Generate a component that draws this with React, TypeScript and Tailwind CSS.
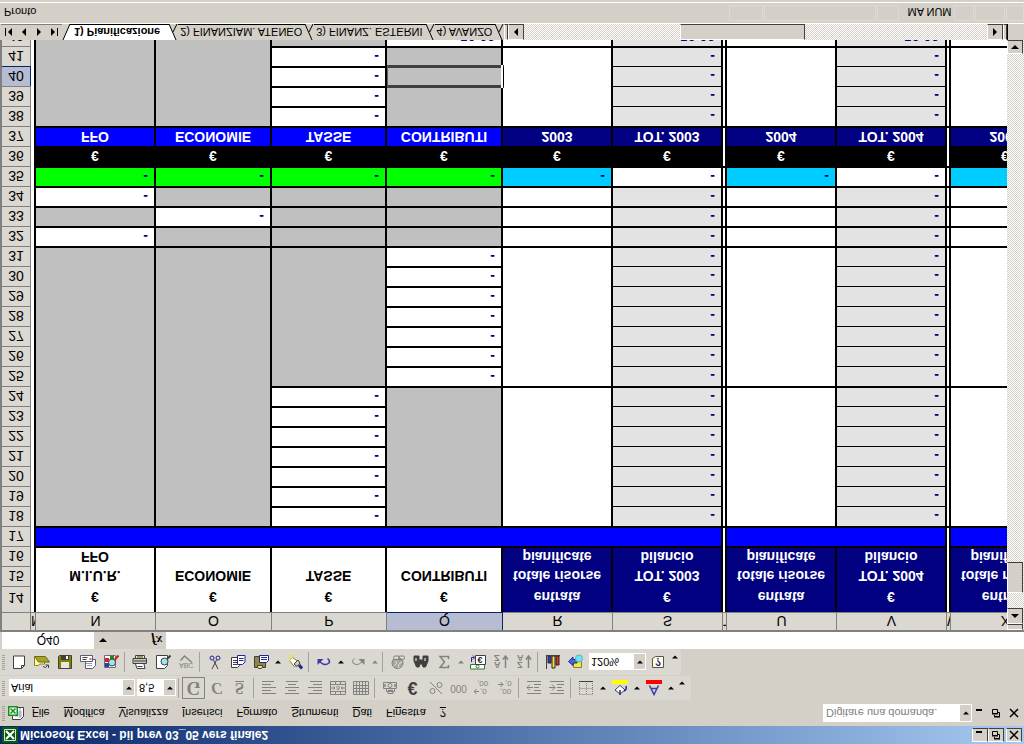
import React from 'react';
import clsx from 'clsx';

type Fill = 'white' | 'gray' | 'light' | 'green' | 'cyan' | 'blue' | 'navy' | 'black';

interface Cell {
  fill: Fill;
  text?: string;
  line?: 0 | 1 | 2;
  open?: boolean;
}

interface Row {
  n: number;
  cells: Cell[];
}

const fills: Record<Fill, string> = {
  white: 'bg-white text-[#000080]',
  gray: 'bg-[#c0c0c0] text-[#000080]',
  light: 'bg-[#e3e3e3] text-[#000080]',
  green: 'bg-[#00ff00] text-[#000080]',
  cyan: 'bg-[#00ccff] text-[#000080]',
  blue: 'bg-[#0000ff] text-white',
  navy: 'bg-[#000080] text-white',
  black: 'bg-black text-white',
};

const columns = [
  { name: 'M', width: 'w-[5px]' },
  { name: 'N', width: 'w-[120px]' },
  { name: 'O', width: 'w-[116px]' },
  { name: 'P', width: 'w-[115px]' },
  { name: 'Q', width: 'w-[116px]' },
  { name: 'R', width: 'w-[110px]' },
  { name: 'S', width: 'w-[110px]' },
  { name: 'T', width: 'w-[4px]' },
  { name: 'U', width: 'w-[110px]' },
  { name: 'V', width: 'w-[110px]' },
  { name: 'W', width: 'w-[4px]' },
  { name: 'X', width: 'w-[110px]' },
];

const cell = (fill: Fill, text = '', line: 0 | 1 | 2 = 0, open = false): Cell => ({ fill, text, line, open });

// N..Q come from the caller, the yearly blocks R..X repeat
const makeRow = (n: number, first: Cell[], total: Cell, sum: Cell, gap: 0 | 2): Row => {
  const spacer = cell('white', '', gap);
  return { n, cells: [cell('white'), ...first, total, sum, spacer, total, sum, spacer, total] };
};

const headingRow = (n: number, names: string[], total: string, years: string[], line: 0 | 2): Row => ({
  n,
  cells: [
    cell('white'),
    ...names.map((name) => cell('white', name, line)),
    cell('navy', total, line),
    cell('navy', years[0], line),
    cell('white'),
    cell('navy', total, line),
    cell('navy', years[1], line),
    cell('white'),
    cell('navy', total, line),
  ],
});

const gray = cell('gray');
const grayLine = cell('gray', '', 2);
const dash = cell('white', '-', 2);
const green = cell('green', '-', 2);

const rows: Row[] = [
  headingRow(14, ['€', '€', '€', '€'], 'entrata', ['€', '€'], 0),
  headingRow(15, ['M.I.U.R.', 'ECONOMIE', 'TASSE', 'CONTRIBUTI'], 'totale risorse', ['TOT. 2003', 'TOT. 2004'], 0),
  headingRow(16, ['FFO', '', '', ''], 'pianificate', ['bilancio', 'bilancio'], 2),
  makeRow(
    17,
    [1, 2, 3, 4].map(() => cell('blue', '', 2, true)),
    cell('blue', '', 2, true),
    cell('blue', '', 2),
    2,
  ),
];

for (let n = 18; n <= 24; n++) {
  const last = n === 24;
  rows.push(
    makeRow(
      n,
      [gray, gray, dash, last ? grayLine : gray],
      cell('white', '', last ? 2 : 0),
      cell('light', '-', last ? 2 : 1),
      last ? 2 : 0,
    ),
  );
}

for (let n = 25; n <= 31; n++) {
  const last = n === 31;
  const block = last ? grayLine : gray;
  rows.push(
    makeRow(
      n,
      [block, block, block, dash],
      cell('white', '', last ? 2 : 0),
      cell('light', '-', last ? 2 : 1),
      last ? 2 : 0,
    ),
  );
}

rows.push(
  makeRow(32, [dash, grayLine, grayLine, grayLine], cell('white', '', 2), cell('light', '-', 2), 2),
  makeRow(33, [grayLine, dash, grayLine, grayLine], cell('white', '', 2), cell('light', '-', 2), 2),
  makeRow(34, [dash, grayLine, grayLine, grayLine], cell('white', '', 2), cell('light', '-', 2), 2),
  makeRow(35, [green, green, green, green], cell('cyan', '-', 2), cell('white', '-', 2), 2),
  makeRow(
    36,
    [1, 2, 3, 4].map(() => cell('black', '€')),
    cell('black', '€'),
    cell('black', '€'),
    0,
  ),
  {
    n: 37,
    cells: [
      cell('white'),
      cell('blue', 'FFO', 2),
      cell('blue', 'ECONOMIE', 2),
      cell('blue', 'TASSE', 2),
      cell('blue', 'CONTRIBUTI', 2),
      cell('navy', '2003', 2),
      cell('navy', 'TOT. 2003', 2),
      cell('white', '', 2),
      cell('navy', '2004', 2),
      cell('navy', 'TOT. 2004', 2),
      cell('white', '', 2),
      cell('navy', '2005', 2),
    ],
  },
);

for (let n = 38; n <= 41; n++) {
  const last = n === 41;
  rows.push(
    makeRow(
      n,
      [gray, gray, dash, last ? grayLine : gray],
      cell('white', '', last ? 2 : 0),
      cell('light', '-', last ? 2 : 1),
      last ? 2 : 0,
    ),
  );
}

rows.push(makeRow(42, [gray, gray, gray, cell('white', '50,00')], cell('white'), cell('light', '50,00'), 0));

const raised = 'border border-white border-r-[#404040] border-b-[#404040] bg-[#d4d0c8]';
const dither = 'bg-[repeating-conic-gradient(#ffffff_0_25%,#d4d0c8_0_50%)] bg-[length:2px_2px]';

const Triangle = ({ dir, small }: { dir: 'up' | 'down' | 'left' | 'right'; small?: boolean }) => {
  const shapes = { up: 'M0 6h8L4 2z', down: 'M0 2h8L4 6z', left: 'M6 0v8L2 4z', right: 'M2 0v8l4-4z' };
  return (
    <svg viewBox="0 0 8 8" className={small ? 'h-[6px] w-[6px]' : 'h-2 w-2'} aria-hidden="true">
      <path d={shapes[dir]} fill="currentColor" />
    </svg>
  );
};

const Icon = ({ children }: { children: React.ReactNode }) => (
  <svg viewBox="0 0 16 16" className="h-4 w-4" fill="none" stroke="#404040" aria-hidden="true">
    {children}
  </svg>
);

const G = '#848280';

const icons = {
  fresh: (
    <Icon>
      <path d="M2.500 1.500h8l3 3v9.500h-11z" fill="#fff" />
      <path d="M10.500 1.500v3h3" />
    </Icon>
  ),
  open: (
    <Icon>
      <path d="M.5 13V4.500h4l1 1.500h5v2" fill="#ffff9a" stroke="#84823a" />
      <path d="M.5 13.500L4.500 8h11l-4 5.500z" fill="#a5a22e" stroke="#6b6810" />
      <path d="M9 3.500q3-2.500 4.500.8M14.500 2v3h-3" />
    </Icon>
  ),
  save: (
    <Icon>
      <path d="M1.500 1.500h13v13h-12l-1-1z" fill="#848200" />
      <path d="M4 2h8v6H4z" fill="#e8e6e0" stroke="none" />
      <path d="M4 10h8v4H4z" fill="#404040" stroke="none" />
      <path d="M9 11h2v3H9z" fill="#fff" stroke="none" />
    </Icon>
  ),
  mail: (
    <Icon>
      <path d="M5.500 1.500h7l3 3v6h-10z" fill="#fff" stroke="#5a5a7b" />
      <path d="M.5 8.500h12v6H.5z" fill="#fff" stroke="#5a5a7b" />
      <path d="M2.500 10.500h4M2.500 12.500h5" stroke="#404040" />
      <path d="M9.500 10h2v2h-2z" fill="#d66" stroke="none" />
      <path d="M6 6.500h6M7 4.500h5" stroke="#9a9ac0" />
    </Icon>
  ),
  research: (
    <Icon>
      <path d="M1.500 2.500h11v12h-11z" fill="#fff" stroke="#6b6b84" />
      <path d="M2 3h4v4H2z" fill="#24a" stroke="none" />
      <path d="M2 8h4v4H2z" fill="#d22" stroke="none" />
      <path d="M7 11h4v3H7z" fill="#282" stroke="none" />
      <circle cx="9" cy="7.500" r="3.500" fill="#9de6ee" />
      <path d="M11.500 10l4 4.500" stroke="#c22" strokeWidth="2" />
    </Icon>
  ),
  print: (
    <Icon>
      <path d="M3.500 6l1.500-4.500h8L12 6" fill="#fff" />
      <path d="M1 6.500h13.500v5H1z" fill="#c9c6be" />
      <path d="M3.500 11.500h9v3h-9z" fill="#f4f4a0" />
      <path d="M5.500 3.500h5M2 9h12M5 13h6" />
    </Icon>
  ),
  preview: (
    <Icon>
      <path d="M1.500 1.500h8l3 3v10h-11z" fill="#fff" />
      <circle cx="9.500" cy="8.500" r="3.500" fill="#9de6ee" />
      <path d="M12 11l3.500 3.500" strokeWidth="2" />
    </Icon>
  ),
  spell: (
    <Icon>
      <text x="1" y="7" fontSize="7" fill={G} stroke="none" className="font-['Liberation_Sans']">ABC</text>
      <path d="M2.500 9.500l4 4.500L14 7.500" stroke={G} strokeWidth="1.500" />
    </Icon>
  ),
  cut: (
    <Icon>
      <path d="M5 1l4.500 9M11 1L6.500 10" />
      <circle cx="5" cy="12" r="2" stroke="#24249a" />
      <circle cx="11" cy="12" r="2" stroke="#24249a" />
    </Icon>
  ),
  copy: (
    <Icon>
      <path d="M1.500 2.500h6l2 2v8h-8z" fill="#fff" />
      <path d="M3 5.500h4M3 7.500h4M3 9.500h4" />
      <path d="M7.500 5.500h5l2.500 2.500v6.500H7.500z" fill="#fff" stroke="#24249a" />
      <path d="M9 9.500h4.500M9 11.500h4.500" stroke="#24249a" />
    </Icon>
  ),
  paste: (
    <Icon>
      <path d="M1.500 2.500h11v11h-11z" fill="#8c8a3c" />
      <path d="M4.500 4.500V2.500L6 1.500h2l1.500 1v2z" fill="#f1ee74" />
      <path d="M6.500 7.500h7l2 2v5h-9z" fill="#fff" stroke="#24249a" />
      <path d="M8 10.500h6M8 12.500h6" stroke="#24249a" />
    </Icon>
  ),
  brush: (
    <Icon>
      <path d="M2.500 9.500l5-6.500 4.500 5-6.500 4.500z" fill="#fff" stroke="#84823a" />
      <path d="M1 12l3 2.500h4M1.500 9l5 5" stroke="#e8e23a" />
      <path d="M7 6l4 4 2-3-3-3.500z" fill="#d4d0a0" />
      <path d="M12 5l3-3.500" stroke="#24249a" strokeWidth="3" />
    </Icon>
  ),
  undo: (
    <Icon>
      <path d="M4 8Q9 3.500 13 7q1.500 2.500-1.500 4.500" stroke="#3a3aa8" strokeWidth="1.500" />
      <path d="M1.500 5v6h6z" fill="#3a3aa8" stroke="none" />
    </Icon>
  ),
  redo: (
    <Icon>
      <path d="M12 8Q7 3.500 3 7q-1.500 2.500 1.500 4.500" stroke={G} />
      <path d="M14.500 5v6h-6z" fill={G} stroke="none" />
    </Icon>
  ),
  link: (
    <Icon>
      <circle cx="7.500" cy="7" r="5.500" fill="#a8a5a0" stroke={G} />
      <path d="M4 4q4 2 2 5M9 2q-2 4 3 6" stroke="#e4e2dc" />
      <rect x="3.500" y="10.500" width="6" height="3.500" rx="1.500" fill="#dbd8d1" stroke={G} />
      <rect x="8.500" y="10.500" width="6" height="3.500" rx="1.500" stroke={G} />
    </Icon>
  ),
  find: (
    <Icon>
      <path d="M1 14V9l2.500-6H6l1 3h2l1-3h2.500L15 9v5h-5v-4H6v4z" fill="#404040" />
      <path d="M3 12V9M12 12V9" stroke="#fff" />
    </Icon>
  ),
  sum: (
    <Icon>
      <path d="M12.500 5V2.500H4L8.500 8 4 13.500h8.500V11" stroke={G} strokeWidth="1.500" />
    </Icon>
  ),
  euroBox: (
    <Icon>
      <path d="M.5 1h14v4.500H.5z" fill="#fff" stroke="#2a7a3a" />
      <circle cx="7.500" cy="3.500" r="1.500" stroke="#2a7a3a" />
      <path d="M5.500 5.500h10v9h-10z" fill="#fff" />
      <text x="7.500" y="13" fontSize="9" fontWeight="700" fill="#222" stroke="none" className="font-['Liberation_Sans']">€</text>
      <path d="M1.500 8v4.500H4M3 10.500l2 2-2 2" stroke="#24249a" />
    </Icon>
  ),
  sortUp: (
    <Icon>
      <text x="1" y="8" fontSize="9" fontWeight="700" fill={G} stroke="none" className="font-['Liberation_Sans']">A</text>
      <text x="1" y="15" fontSize="9" fontWeight="700" fill={G} stroke="none" className="font-['Liberation_Sans']">Z</text>
      <path d="M12.500 2v12M10 10.500l2.500 3.500 2.500-3.500" stroke={G} strokeWidth="1.500" />
    </Icon>
  ),
  sortDown: (
    <Icon>
      <text x="1" y="8" fontSize="9" fontWeight="700" fill={G} stroke="none" className="font-['Liberation_Sans']">Z</text>
      <text x="1" y="15" fontSize="9" fontWeight="700" fill={G} stroke="none" className="font-['Liberation_Sans']">A</text>
      <path d="M12.500 2v12M10 10.500l2.500 3.500 2.500-3.500" stroke={G} strokeWidth="1.500" />
    </Icon>
  ),
  chart: (
    <Icon>
      <path d="M1.500 1v13.500H14" />
      <path d="M3 7h3v7H3z" fill="#3a3ad0" stroke="#222" />
      <path d="M7 2h3v12H7z" fill="#f4e83a" stroke="#222" />
      <path d="M11 5h3v9h-3z" fill="#e03030" stroke="#222" />
      <path d="M1 14.500h14" />
    </Icon>
  ),
  draw: (
    <Icon>
      <path d="M5.500 2.500h8v6h-8z" fill="#f4e83a" stroke="#84823a" />
      <path d="M.5 8.500l4.500-4V7h4v3.500H5V13z" fill="#4a6ad0" stroke="#24249a" />
      <circle cx="11" cy="11.500" r="3.500" fill="#6fe3ee" stroke="#5ab0c0" />
    </Icon>
  ),
  help: (
    <Icon>
      <path d="M2.500 2.500h11v11h-8l-3-2z" fill="#ffffd8" stroke="#555" />
      <text x="5" y="12" fontSize="10" fontWeight="700" fill="#24249a" stroke="none" className="font-['Liberation_Sans']">?</text>
    </Icon>
  ),
  left: (
    <Icon>
      <path d="M1 2.500h14M1 5.500h9M1 8.500h14M1 11.500h9M1 14.500h12" stroke={G} />
    </Icon>
  ),
  center: (
    <Icon>
      <path d="M1 2.500h14M4 5.500h8M1 8.500h14M4 11.500h8M2 14.500h12" stroke={G} />
    </Icon>
  ),
  right: (
    <Icon>
      <path d="M1 2.500h14M6 5.500h9M1 8.500h14M6 11.500h9M3 14.500h12" stroke={G} />
    </Icon>
  ),
  merge: (
    <Icon>
      <path d="M.5 1.500h15v13H.5zM.5 4.500h15M.5 11.500h15M5.500 1.500v3M10.500 1.500v3M5.500 11.500v3M10.500 11.500v3" stroke={G} />
      <path d="M1 8h4M11 8h4M3.500 6.500L5 8 3.500 9.500M12.500 6.500L11 8l1.500 1.500" stroke={G} />
      <text x="6" y="10" fontSize="7" fill={G} stroke="none" className="font-['Liberation_Sans']">a</text>
    </Icon>
  ),
  grid: (
    <Icon>
      <path d="M.5 1.500h15v13H.5zM.5 4.500h15M.5 7.500h15M.5 10.500h15M3.500 2v12M6.500 2v12M9.500 2v12M12.500 2v12" stroke={G} />
    </Icon>
  ),
  money: (
    <Icon>
      <path d="M1.500 7.500h13v6h-13zM4.500 7V4.500h8V7M6 4V2.500h5V4" stroke={G} />
      <circle cx="8" cy="10.500" r="2" stroke={G} />
      <path d="M3 9v3M13 9v3M6 5.500h5" stroke={G} strokeWidth="1.500" />
    </Icon>
  ),
  percent: (
    <Icon>
      <circle cx="4.500" cy="5" r="2.500" stroke={G} />
      <circle cx="11.500" cy="11" r="2.500" stroke={G} />
      <path d="M14 2L2 14" stroke={G} />
    </Icon>
  ),
  moreDec: (
    <Icon>
      <text x="6" y="7" fontSize="8" fill={G} stroke="none" className="font-['Liberation_Sans']">,0</text>
      <text x="3" y="15" fontSize="8" fill={G} stroke="none" className="font-['Liberation_Sans']">,00</text>
      <path d="M0 4.500h5M2.500 2L0 4.500 2.500 7" stroke={G} />
    </Icon>
  ),
  lessDec: (
    <Icon>
      <text x="3" y="7" fontSize="8" fill={G} stroke="none" className="font-['Liberation_Sans']">,00</text>
      <text x="8" y="15" fontSize="8" fill={G} stroke="none" className="font-['Liberation_Sans']">,0</text>
      <path d="M1 11.500h5M3.500 9L6 11.500 3.500 14" stroke={G} />
    </Icon>
  ),
  outdent: (
    <Icon>
      <path d="M1 2.500h14M8 5.500h7M8 8.500h5M8 11.500h7M1 14.500h14M1 8.500h6M4 5.500l-3 3 3 3" stroke={G} />
    </Icon>
  ),
  indent: (
    <Icon>
      <path d="M1 2.500h14M8 5.500h7M8 8.500h5M8 11.500h7M1 14.500h14M0 8.500h6M3 5.500l3 3-3 3" stroke={G} />
    </Icon>
  ),
  borders: (
    <Icon>
      <path d="M1.500 1.500h13M1.500 7.500h13M1.500 2v12M8.500 2v12M14.500 2v12" stroke={G} strokeDasharray="1 1" />
      <path d="M1 14.500h14" stroke="#404040" />
    </Icon>
  ),
  bucket: (
    <Icon>
      <path d="M3 6l5-4 5 4-5 4.500z" fill="#fff" />
      <path d="M8 6V1M12 5q3 1 2 5" stroke="#24249a" strokeWidth="1.500" />
      <path d="M0 12h16v4H0z" fill="#ffff00" stroke="none" />
    </Icon>
  ),
  fontColor: (
    <Icon>
      <path d="M3.500 10.500L8 1.500l4.500 9M5 7.500h6" stroke="#3a3aa8" strokeWidth="1.500" />
      <path d="M0 12h16v4H0z" fill="#ff0000" stroke="none" />
    </Icon>
  ),
};

const Tool = ({ label, children }: { label: string; children: React.ReactNode }) => (
  <button aria-label={label} className="flex h-[22px] w-[23px] shrink-0 items-center justify-center">
    {children}
  </button>
);

const Arrow = ({ label, off }: { label: string; off?: boolean }) => (
  <button aria-label={label} className={clsx('flex h-[22px] w-[11px] shrink-0 items-center justify-center', off && 'text-[#848280]')}>
    <Triangle dir="down" small />
  </button>
);

const Sep = () => <div className="mx-[2px] h-5 w-[2px] shrink-0 border-l border-[#a5a29c]" />;

const Grip = () => (
  <div className="mx-[2px] h-4 w-[3px] shrink-0 bg-[repeating-linear-gradient(#a5a29c_0_1px,transparent_1px_2px)]" />
);

interface ComboProps {
  label: string;
  value: string;
  className: string;
}

const Combo = ({ label, value, className }: ComboProps) => (
  <div className={clsx('relative flex h-[17px] shrink-0 bg-white', className)}>
    <select aria-label={label} className="h-full w-full appearance-none bg-transparent pl-[2px] pr-3 text-[11px] leading-4 outline-none">
      <option>{value}</option>
    </select>
    <span className="pointer-events-none absolute inset-y-px right-px flex w-[11px] items-center justify-center bg-[#d4d0c8]">
      <Triangle dir="down" small />
    </span>
  </div>
);

const MinGlyph = () => (
  <svg viewBox="0 0 10 10" className="h-[10px] w-[10px]" aria-hidden="true">
    <path d="M1 7h6v2H1z" fill="#000" />
  </svg>
);

const RestoreGlyph = () => (
  <svg viewBox="0 0 10 10" className="h-[10px] w-[10px]" fill="none" stroke="#000" aria-hidden="true">
    <path d="M3.500 3V1.500h5v4H7M3 1h6M1.500 4.500h5v4h-5zM1 4h6" />
  </svg>
);

const CloseGlyph = () => (
  <svg viewBox="0 0 10 10" className="h-[10px] w-[10px]" fill="none" stroke="#000" strokeWidth="1.500" aria-hidden="true">
    <path d="M1 1l8 8M9 1L1 9" />
  </svg>
);

const ExcelMark = () => (
  <svg viewBox="0 0 16 16" className="h-4 w-4" aria-hidden="true">
    <path d="M0 0h16v16H0z" fill="#0a5a14" />
    <path d="M2.500 2.500h11v11h-11z" fill="none" stroke="#cfe8cf" />
    <path d="M4 4l8 8M12 4l-8 8" stroke="#fff" strokeWidth="2" />
  </svg>
);

const BookMark = () => (
  <svg viewBox="0 0 16 16" className="h-4 w-4" aria-hidden="true">
    <path d="M4.500 1.500h8l3 3v9h-11z" fill="#fff" stroke="#404040" />
    <path d="M7 5h7M7 7h7M7 9h7M12 3v10" stroke="#9aa0c0" />
    <path d="M0 5h10v10H0z" fill="#109018" />
    <path d="M1.500 6.500h7v7h-7z" fill="#fff" />
    <path d="M2.500 7.500l5 5M7.500 7.500l-5 5" stroke="#109018" strokeWidth="1.500" />
  </svg>
);

const menus = [
  ['', 'F', 'ile'],
  ['', 'M', 'odifica'],
  ['', 'V', 'isualizza'],
  ['', 'I', 'nserisci'],
  ['F', 'o', 'rmato'],
  ['', 'S', 'trumenti'],
  ['', 'D', 'ati'],
  ['Fi', 'n', 'estra'],
  ['', '?', ''],
];

const TitleBar = () => (
  <header className="flex h-[18px] shrink-0 items-center bg-linear-to-r from-[#0a246a] to-[#a6caf0] px-[2px]">
    <ExcelMark />
    <h1 className="ml-[2px] flex-1 text-[12px] leading-4 font-bold text-white">Microsoft Excel - bil prev 03_05 vers finale2</h1>
    <button aria-label="Riduci a icona" className={clsx('flex h-[14px] w-4 items-center justify-center', raised)}>
      <MinGlyph />
    </button>
    <button aria-label="Ripristina" className={clsx('flex h-[14px] w-4 items-center justify-center', raised)}>
      <RestoreGlyph />
    </button>
    <button aria-label="Chiudi" className={clsx('ml-[2px] flex h-[14px] w-4 items-center justify-center', raised)}>
      <CloseGlyph />
    </button>
  </header>
);

const MenuBar = () => (
  <nav className="flex h-[26px] shrink-0 items-center pr-[2px]">
    <Grip />
    <span className="mr-2 ml-px">
      <BookMark />
    </span>
    <div className="flex flex-1 gap-[14px]">
      {menus.map(([before, key, after]) => (
        <button key={key + after} className="text-[11px] leading-4">
          {before}
          <span className="underline">{key}</span>
          {after}
        </button>
      ))}
    </div>
    <div className="flex h-[18px] w-[149px] bg-white">
      <input
        aria-label="Domanda"
        defaultValue="Digitare una domanda."
        className="min-w-0 flex-1 pl-[3px] text-[11px] text-[#808080] outline-none"
      />
      <button aria-label="Domande recenti" className="m-px flex w-[11px] items-center justify-center bg-[#d4d0c8]">
        <Triangle dir="down" small />
      </button>
    </div>
    <button aria-label="Riduci finestra" className="flex w-4 justify-center">
      <MinGlyph />
    </button>
    <button aria-label="Ripristina finestra" className="flex w-4 justify-center">
      <RestoreGlyph />
    </button>
    <button aria-label="Chiudi finestra" className="ml-[2px] flex w-4 justify-center">
      <CloseGlyph />
    </button>
  </nav>
);

const FormatBar = () => (
  <div className="mb-px flex h-6 w-max items-center rounded-r bg-[#dbd8d1] pr-1">
    <Grip />
    <Combo label="Tipo di carattere" value="Arial" className="ml-[2px] w-[126px]" />
    <Combo label="Dimensione carattere" value="8,5" className="ml-[2px] w-[39px]" />
    <Sep />
    <button
      aria-label="Grassetto"
      className="flex h-[22px] w-[23px] items-center justify-center border border-[#848280] font-['Liberation_Serif'] text-[18px] leading-5 font-bold text-[#848280]"
    >
      G
    </button>
    <button aria-label="Corsivo" className="w-[23px] font-['Liberation_Serif'] text-[16px] leading-5 font-bold text-[#848280] italic">
      C
    </button>
    <button aria-label="Sottolineato" className="w-[23px] font-['Liberation_Serif'] text-[16px] leading-5 font-bold text-[#848280] underline">
      S
    </button>
    <Sep />
    <Tool label="Allinea a sinistra">{icons.left}</Tool>
    <Tool label="Allinea al centro">{icons.center}</Tool>
    <Tool label="Allinea a destra">{icons.right}</Tool>
    <Tool label="Unisci e centra">{icons.merge}</Tool>
    <Tool label="Formato celle">{icons.grid}</Tool>
    <Sep />
    <Tool label="Valuta">{icons.money}</Tool>
    <button aria-label="Euro" className="w-[23px] text-[18px] leading-5 font-bold text-[#404040]">€</button>
    <Tool label="Stile percentuale">{icons.percent}</Tool>
    <button aria-label="Stile separatore" className="w-[23px] text-[10px] leading-5 text-[#848280]">000</button>
    <Tool label="Aumenta decimali">{icons.moreDec}</Tool>
    <Tool label="Diminuisci decimali">{icons.lessDec}</Tool>
    <Sep />
    <Tool label="Riduci rientro">{icons.outdent}</Tool>
    <Tool label="Aumenta rientro">{icons.indent}</Tool>
    <Sep />
    <Tool label="Bordi">{icons.borders}</Tool>
    <Arrow label="Altri bordi" />
    <Tool label="Colore riempimento">{icons.bucket}</Tool>
    <Arrow label="Altri riempimenti" />
    <Tool label="Colore carattere">{icons.fontColor}</Tool>
    <Arrow label="Altri colori" />
    <button aria-label="Opzioni formattazione" className="flex h-4 w-[11px] items-end justify-center">
      <Triangle dir="down" small />
    </button>
  </div>
);

const StandardBar = () => (
  <div className="flex h-[26px] w-max items-center rounded-r bg-[#dbd8d1] pr-px">
    <Grip />
    <Tool label="Nuovo">{icons.fresh}</Tool>
    <Tool label="Apri">{icons.open}</Tool>
    <Tool label="Salva">{icons.save}</Tool>
    <Tool label="Posta elettronica">{icons.mail}</Tool>
    <Tool label="Cerca">{icons.research}</Tool>
    <Sep />
    <Tool label="Stampa">{icons.print}</Tool>
    <Tool label="Anteprima">{icons.preview}</Tool>
    <Tool label="Controllo ortografia">{icons.spell}</Tool>
    <Sep />
    <Tool label="Taglia">{icons.cut}</Tool>
    <Tool label="Copia">{icons.copy}</Tool>
    <Tool label="Incolla">{icons.paste}</Tool>
    <Arrow label="Opzioni incolla" />
    <Tool label="Copia formato">{icons.brush}</Tool>
    <Sep />
    <Tool label="Annulla">{icons.undo}</Tool>
    <Arrow label="Elenco annulla" />
    <Tool label="Ripeti">{icons.redo}</Tool>
    <Arrow label="Elenco ripeti" off />
    <Sep />
    <Tool label="Collegamento">{icons.link}</Tool>
    <Tool label="Trova">{icons.find}</Tool>
    <Tool label="Somma automatica">{icons.sum}</Tool>
    <Arrow label="Altre funzioni" off />
    <Tool label="Conversione euro">{icons.euroBox}</Tool>
    <Tool label="Ordinamento crescente">{icons.sortUp}</Tool>
    <Tool label="Ordinamento decrescente">{icons.sortDown}</Tool>
    <Sep />
    <Tool label="Creazione grafico">{icons.chart}</Tool>
    <Tool label="Disegno">{icons.draw}</Tool>
    <Combo label="Zoom" value="120%" className="ml-[2px] w-[57px]" />
    <Tool label="Guida">{icons.help}</Tool>
    <button aria-label="Opzioni standard" className="flex h-4 w-[11px] items-end justify-center">
      <Triangle dir="down" small />
    </button>
  </div>
);

const FormulaBar = () => (
  <div className="flex h-[17px] shrink-0 pl-[2px]">
    <input aria-label="Casella nome" defaultValue="Q40" className="w-[92px] bg-white text-center text-[12px] outline-none" />
    <button aria-label="Elenco nomi" className="flex w-[18px] items-center justify-center">
      <Triangle dir="down" />
    </button>
    <button
      aria-label="Inserisci funzione"
      className="ml-9 w-[18px] shrink-0 font-['Liberation_Serif'] text-[13px] leading-4 font-bold italic"
    >
      fx
    </button>
    <input aria-label="Barra della formula" className="min-w-0 flex-1 bg-white px-1 text-[11px] outline-none" />
  </div>
);

const Sheet = () => (
  <div className="min-w-0 flex-1 overflow-hidden border-t-2 border-l-2 border-[#808080] bg-white">
    <table className="w-[1059px] table-fixed border-separate border-spacing-0 text-[14px] leading-[18px]">
      <thead>
        <tr className="h-[18px]">
          <th className="w-[29px] border-r border-b border-[#808080] bg-[#dbd8d1] p-0" aria-label="Seleziona tutto" />
          {columns.map(({ name, width }) => (
            <th
              key={name}
              scope="col"
              className={clsx(
                'h-[18px] overflow-hidden border-r border-b p-0 leading-4 font-normal',
                width,
                name === 'Q' ? 'border-[#0a246a] bg-[#b6bdd2]' : 'border-[#808080] bg-[#dbd8d1]',
              )}
            >
              {name}
            </th>
          ))}
        </tr>
      </thead>
      <tbody>
        {rows.map(({ n, cells }) => (
          <tr key={n} className={n === 14 ? 'h-[26px]' : 'h-5'}>
            <th
              scope="row"
              className={clsx(
                'border-r border-b px-0 pt-0 text-center font-normal',
                n === 14 ? 'pb-[2px] align-bottom' : 'pb-0',
                n === 40 ? 'border-[#0a246a] bg-[#b6bdd2]' : 'border-[#808080] bg-[#dbd8d1]',
              )}
            >
              {n}
            </th>
            {cells.map((c, i) => (
              <td
                key={columns[i].name}
                className={clsx(
                  'relative border-black pt-0 pl-0 font-bold whitespace-nowrap',
                  fills[c.fill],
                  n < 17 && c.fill === 'white' && 'text-black',
                  n === 14 ? 'pb-[2px] align-bottom' : 'pb-0',
                  c.open ? 'border-r-0' : 'border-r-2',
                  c.line === 2 && 'border-b-2',
                  c.line === 1 && 'border-b',
                  c.text === '-' || c.text === '50,00' ? 'pr-[6px] text-right' : 'pr-0 text-center',
                )}
              >
                {c.text}
                {n === 40 && columns[i].name === 'Q' && (
                  <span className="absolute -top-[2px] -right-[3px] -bottom-px left-0 z-10 border-y-[3px] border-r border-l border-y-[#404040] border-r-black border-l-[#606060]">
                    <span className="absolute -inset-y-[3px] right-0 w-[2px] bg-white" />
                  </span>
                )}
              </td>
            ))}
          </tr>
        ))}
      </tbody>
    </table>
  </div>
);

const VerticalScroll = () => (
  <div className={clsx('flex w-[17px] shrink-0 flex-col border-t-2 border-[#808080] pr-px', dither)}>
    <div className={clsx('h-[6px]', raised)} />
    <button aria-label="Scorri in alto" className={clsx('flex h-4 items-center justify-center', raised)}>
      <Triangle dir="up" />
    </button>
    <div className="flex-1 pt-[15px]">
      <div className={clsx('h-[31px]', raised)} />
    </div>
    <button aria-label="Scorri in basso" className={clsx('flex h-[14px] items-center justify-center', raised)}>
      <Triangle dir="down" />
    </button>
  </div>
);

const Slant = ({ from, to, rising }: { from: string; to: string; rising?: boolean }) => (
  <svg viewBox="0 0 12 16" className="h-4 w-3 shrink-0" aria-hidden="true">
    <path d="M0 0h12v16H0z" fill={to} />
    <path d={rising ? 'M0 0h1l7 16H0z' : 'M0 0h10L3 16H0z'} fill={from} />
    <path d={rising ? 'M1 0l7 16M8 15.500h4' : 'M10 0L3 16M7 8l4 8M0 15.500h3'} fill="none" stroke="#000" />
  </svg>
);

const sheets = ['1) Pianificazione', '2) FINANZIAM. ATENEO', '3) FINANZ. ESTERNI', '4) AVANZO'];

const SheetTabs = () => (
  <div className="flex h-4 shrink-0 pl-px">
    <div className="flex w-[61px] shrink-0 items-center justify-between border-b border-[#808080] px-1">
      {['Primo', 'Precedente', 'Successivo', 'Ultimo'].map((label, i) => (
        <button key={label} aria-label={label} className="flex items-center">
          {i === 0 && <span className="h-2 w-px bg-black" />}
          <Triangle dir={i < 2 ? 'left' : 'right'} />
          {i === 3 && <span className="h-2 w-px bg-black" />}
        </button>
      ))}
    </div>
    <Slant from="#d4d0c8" to="#ffffff" rising />
    {sheets.map((name, i) => (
      <React.Fragment key={name}>
        <button
          className={clsx(
            'shrink-0 border-b border-black text-[11px] leading-[14px] whitespace-nowrap',
            i === 0 ? 'bg-white pr-[6px] font-bold' : 'pl-[2px]',
          )}
        >
          {name}
        </button>
        <Slant from={i === 0 ? '#ffffff' : '#d4d0c8'} to="#d4d0c8" />
      </React.Fragment>
    ))}
    <div className="flex min-w-0 flex-1">
      <div className={clsx('w-1', raised)} />
      <button aria-label="Scorri a sinistra" className={clsx('flex w-4 items-center justify-center', raised)}>
        <Triangle dir="left" />
      </button>
      <div className={clsx('flex flex-1 pl-[30%]', dither)}>
        <div className={clsx('w-[125px]', raised)} />
      </div>
      <button aria-label="Scorri a destra" className={clsx('flex w-4 items-center justify-center', raised)}>
        <Triangle dir="right" />
      </button>
      <div className={clsx('w-1', raised)} />
      <div className="w-[17px] border-l border-black" />
    </div>
  </div>
);

const StatusBar = () => (
  <footer className="flex h-6 shrink-0 items-stretch border-t border-white pb-[2px] text-[11px] leading-[22px]">
    <span className="flex-1 border-b border-white pl-1">Pronto</span>
    <span className="flex gap-px border-b border-white py-[2px] leading-[18px]">
      <span className="w-[34px] border border-[#dedad3]" />
      <span className="w-[112px] border border-[#dedad3]" />
      <span className="w-[22px] border border-[#dedad3]" />
      <span className="w-[24px] text-right">MA</span>
      <span className="w-[28px] text-center">NUM</span>
      <span className="w-5 border border-[#dedad3]" />
      <span className="w-[30px] border border-[#dedad3]" />
      <span className="w-[18px] border border-[#dedad3]" />
    </span>
  </footer>
);

export default function App() {
  return (
    <div className="flex h-screen w-full -scale-y-100 flex-col overflow-hidden bg-[#d4d0c8] font-['Liberation_Sans',sans-serif] text-black">
      <TitleBar />
      <MenuBar />
      <FormatBar />
      <StandardBar />
      <FormulaBar />
      <main className="flex min-h-0 flex-1">
        <Sheet />
        <VerticalScroll />
      </main>
      <SheetTabs />
      <StatusBar />
    </div>
  );
}
